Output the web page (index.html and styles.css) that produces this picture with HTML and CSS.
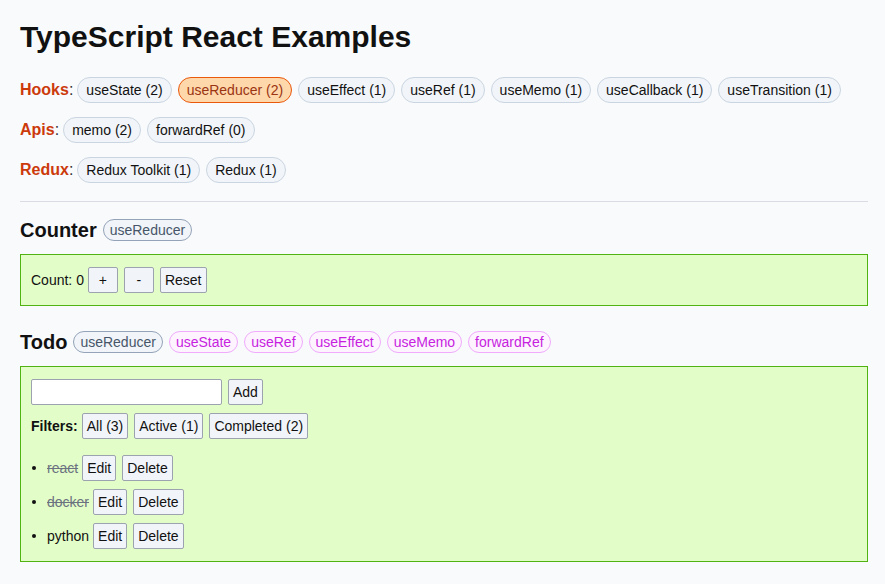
FILE: index.html
```html
<!DOCTYPE html>
<html>
<head>
<meta charset="utf-8">
<link rel="stylesheet" href="styles.css">
</head>
<body>
<div class="page">
  <h1 class="title">TypeScript React Examples</h1>
  <div class="nav-row">
    <span class="nav-label"><b>Hooks</b>:</span>
    <span class="pill">useState (2)</span>
    <span class="pill active">useReducer (2)</span>
    <span class="pill">useEffect (1)</span>
    <span class="pill">useRef (1)</span>
    <span class="pill">useMemo (1)</span>
    <span class="pill">useCallback (1)</span>
    <span class="pill">useTransition (1)</span>
  </div>
  <div class="nav-row">
    <span class="nav-label"><b>Apis</b>:</span>
    <span class="pill">memo (2)</span>
    <span class="pill">forwardRef (0)</span>
  </div>
  <div class="nav-row">
    <span class="nav-label"><b>Redux</b>:</span>
    <span class="pill">Redux Toolkit (1)</span>
    <span class="pill">Redux (1)</span>
  </div>
  <hr class="divider">

  <div class="section-head">
    <h2 class="section-title">Counter</h2>
    <span class="tag">useReducer</span>
  </div>
  <div class="box">
    <div class="row">
      <span>Count: 0</span>
      <button class="btn btn-sq">+</button>
      <button class="btn btn-sq">-</button>
      <button class="btn">Reset</button>
    </div>
  </div>

  <div class="section-head">
    <h2 class="section-title">Todo</h2>
    <span class="tag">useReducer</span>
    <span class="tag tag-pink">useState</span>
    <span class="tag tag-pink">useRef</span>
    <span class="tag tag-pink">useEffect</span>
    <span class="tag tag-pink">useMemo</span>
    <span class="tag tag-pink">forwardRef</span>
  </div>
  <div class="box">
    <div class="row">
      <input class="text-input" type="text">
      <button class="btn">Add</button>
    </div>
    <div class="row filters">
      <b>Filters:</b>
      <button class="btn">All (3)</button>
      <button class="btn">Active (1)</button>
      <button class="btn">Completed (2)</button>
    </div>
    <ul class="todo-list">
      <li><span class="row"><span class="done">react</span><button class="btn">Edit</button><button class="btn">Delete</button></span></li>
      <li><span class="row"><span class="done">docker</span><button class="btn">Edit</button><button class="btn">Delete</button></span></li>
      <li><span class="row"><span>python</span><button class="btn">Edit</button><button class="btn">Delete</button></span></li>
    </ul>
  </div>
</div>
</body>
</html>
```
FILE: styles.css
```css
html, body {
  margin: 0;
  padding: 0;
  background: #f8fafc;
}
body {
  font-family: "Liberation Sans", Arial, sans-serif;
  font-size: 14px;
  color: #111;
}
.page {
  padding: 20px 17px 0 20px;
}
.title {
  margin: 0;
  font-size: 30px;
  line-height: 34px;
  font-weight: bold;
  color: #111;
}
.nav-row {
  display: flex;
  align-items: center;
  gap: 6px;
  height: 26px;
  margin-top: 14px;
  font-size: 14px;
}
.nav-row:first-of-type {
  margin-top: 23px;
}
.nav-label {
  font-size: 16px;
  color: #333;
  margin-right: -2px;
}
.nav-label b {
  color: #cc3a0c;
}
.pill {
  display: inline-flex;
  align-items: center;
  box-sizing: border-box;
  height: 26px;
  padding: 0 8px;
  border: 1px solid #cbd5e1;
  border-radius: 13px;
  background: #f1f5f9;
  color: #111;
  white-space: nowrap;
}
.pill.active {
  background: #fed7aa;
  border-color: #ea580c;
  color: #9a3412;
}
.divider {
  border: none;
  border-top: 1px solid #d9dde3;
  margin: 18px 0 0 0;
  height: 0;
}
.section-head {
  display: flex;
  align-items: center;
  gap: 6px;
  margin-top: 17px;
  height: 22px;
}
.section-title {
  margin: 0;
  font-size: 20px;
  font-weight: bold;
  color: #111;
}
.tag {
  display: inline-flex;
  align-items: center;
  box-sizing: border-box;
  height: 22px;
  padding: 0 6px;
  border: 1px solid #94a3b8;
  border-radius: 11px;
  background: #f1f5f9;
  color: #475569;
  font-size: 14px;
}
.tag-pink {
  border-color: #f0abfc;
  background: #fdf4ff;
  color: #c71ee0;
}
.box {
  margin-top: 13px;
  border: 1px solid #4fb312;
  background: #e3fdc8;
  padding: 12px 10px;
  margin-bottom: 25px;
}
.row {
  display: flex;
  align-items: center;
  font-size: 14px;
}
.btn {
  font-family: "Liberation Sans", Arial, sans-serif;
  font-size: 14px;
  color: #111;
  height: 26px;
  padding: 0 4px;
  border: 1px solid #9ca3af;
  border-radius: 2px;
  background: #f1f5f9;
  margin: 0 0 0 4px;
}
.btn + .btn,
.text-input + .btn {
  margin-left: 6px;
}
.btn-sq {
  width: 30px;
}
.text-input {
  width: 191px;
  height: 26px;
  box-sizing: border-box;
  border: 1px solid #9ca3af;
  border-radius: 2px;
  background: #fff;
  margin: 0;
}
.filters {
  margin-top: 8px;
}
.todo-list {
  margin: 16px 0 0 0;
  padding-left: 16px;
}
.todo-list li {
  margin-top: 8px;
}
.todo-list li:first-child {
  margin-top: 0;
}
.todo-list .row {
  display: inline-flex;
  vertical-align: middle;
}
.done {
  text-decoration: line-through;
  color: #6b7280;
}
```
